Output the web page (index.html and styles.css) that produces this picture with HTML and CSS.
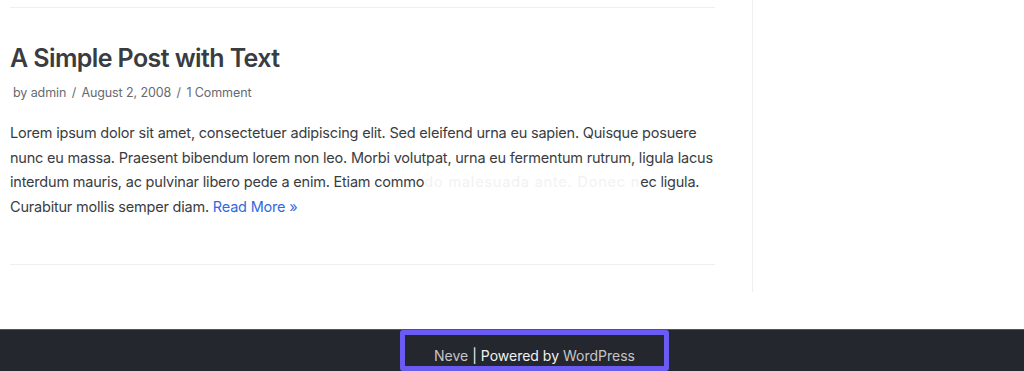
FILE: index.html
```html
<!DOCTYPE html>
<html>
<head>
<meta charset="utf-8">
<link rel="stylesheet" href="styles.css">
</head>
<body>
<div class="wrap">
  <main class="main">
    <article class="post">
      <h2 class="title">A Simple Post with Text</h2>
      <div class="meta">by <span>admin</span> <span class="sep">/</span> August 2, 2008 <span class="sep">/</span> 1 Comment</div>
      <p class="excerpt">Lorem ipsum dolor sit amet, consectetuer adipiscing elit. Sed eleifend urna eu sapien. Quisque posuere nunc eu massa. Praesent bibendum lorem non leo. Morbi volutpat, urna eu fermentum rutrum, ligula lacus interdum mauris, ac pulvinar libero pede a enim. Etiam commo<span class="faded">do malesuada ante. Donec n</span>ec ligula. Curabitur mollis semper diam. <a class="more" href="#">Read More »</a></p>
    </article>
  </main>
  <aside class="sidebar"></aside>
</div>
<footer class="footer">
  <div class="credit"><a href="#">Neve</a> | Powered by <a href="#">WordPress</a></div>
</footer>
</body>
</html>
```
FILE: styles.css
```css
html, body {
  margin: 0;
  padding: 0;
  background: #fff;
  font-family: Inter, "Noto Sans", sans-serif;
  color: #393c41;
}
.wrap {
  display: flex;
  height: 292px;
  margin-bottom: 37px;
}
.main {
  width: 705px;
  padding-left: 10px;
  padding-right: 37px;
}
.post {
  border-top: 1px solid #efefef;
  border-bottom: 1px solid #efefef;
  margin-top: 7px;
  padding-top: 34px;
  height: 222px;
}
.title {
  margin: 0;
  font-size: 25px;
  font-weight: 600;
  line-height: 32px;
  letter-spacing: -0.6px;
  color: #393c41;
}
.meta {
  margin-top: 10px;
  padding-left: 3px;
  font-size: 12.5px;
  letter-spacing: -0.1px;
  color: #676a6f;
  line-height: 18px;
}
.meta .sep { margin: 0 2px; }
.excerpt {
  margin: 19px 0 0;
  font-size: 14.5px;
  line-height: 24.5px;
  letter-spacing: -0.2px;
  color: #393c41;
}
.faded {
  color: #f2f2f2;
  letter-spacing: 0.8px;
}
.more {
  color: #2f6bdc;
  text-decoration: none;
}
.sidebar {
  flex: 1;
  border-left: 1px solid #efefef;
}
.footer {
  height: 42px;
  background: #24272e;
  display: flex;
  justify-content: center;
  border-top: 1px solid #555;
  box-sizing: border-box;
}
.credit {
  width: 269px;
  height: 41px;
  margin-left: 45px;
  box-sizing: border-box;
  border: 5px solid #6a5cf2;
  border-radius: 3px;
  color: #f2f2f2;
  font-size: 14px;
  text-align: center;
  padding-top: 12px;
  line-height: 18px;
}
.credit a {
  color: #c5c6c8;
  text-decoration: none;
}
```
